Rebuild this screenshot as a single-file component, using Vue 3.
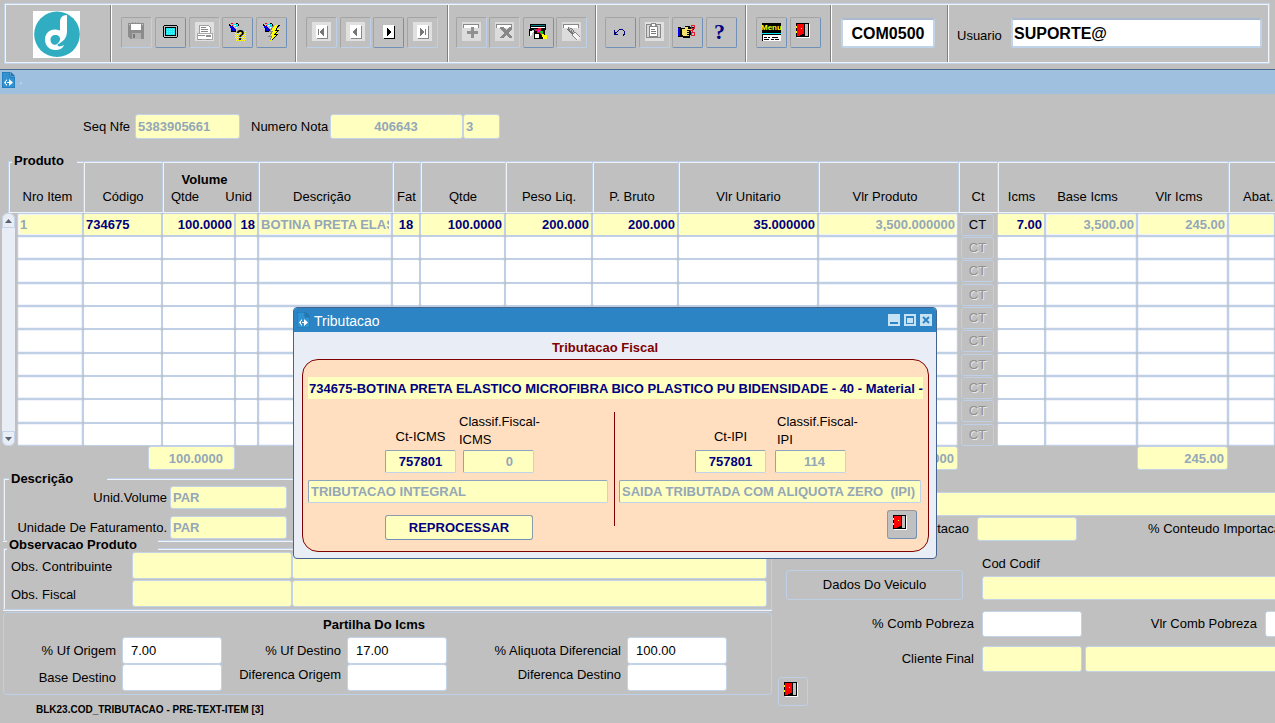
<script setup>
const columns = [
  { key: 'item', label: 'Nro Item', align: 'left', value: '1', locked: true },
  { key: 'codigo', label: 'Código', align: 'left', value: '734675' },
  { key: 'volQtde', label: 'Volume Qtde', align: 'right', value: '100.0000' },
  { key: 'volUnid', label: 'Volume Unid', align: 'right', value: '18' },
  { key: 'descricao', label: 'Descrição', align: 'left', value: 'BOTINA PRETA ELASTICO MICROFIBRA', locked: true },
  { key: 'fat', label: 'Fat', align: 'center', value: '18' },
  { key: 'qtde', label: 'Qtde', align: 'right', value: '100.0000' },
  { key: 'pesoLiq', label: 'Peso Liq.', align: 'right', value: '200.000' },
  { key: 'pesoBruto', label: 'P. Bruto', align: 'right', value: '200.000' },
  { key: 'unitario', label: 'Vlr Unitario', align: 'right', value: '35.000000' },
  { key: 'produto', label: 'Vlr Produto', align: 'right', value: '3,500.000000', locked: true },
  { key: 'ct', button: true },
  { key: 'icms', label: 'Icms', align: 'right', value: '7.00' },
  { key: 'baseIcms', label: 'Base Icms', align: 'right', value: '3,500.00', locked: true },
  { key: 'vlrIcms', label: 'Vlr Icms', align: 'right', value: '245.00', locked: true },
  { key: 'abat', label: 'Abat.', align: 'right', value: '', locked: true },
]
const rows = Array.from({ length: 10 }, (_, i) => i)
</script>

<template>
  <div class="page">
    <svg class="defs" aria-hidden="true">
      <defs>
        <pattern id="dots" width="2" height="2" patternUnits="userSpaceOnUse">
          <path d="M0 0h1v1H0zM1 1h1v1H1z" fill="#ff0" />
        </pattern>
      </defs>
      <symbol id="door" viewBox="0 0 19 19">
        <path d="M1 15h12v1H1zM13 2h1v14h-1z" fill="#fff" />
        <path d="M0 1h13v14H0z" fill="#000" />
        <path d="M9 2h3v12H9z" fill="#c0c0c0" />
        <path d="M1 2h7v10H6v1H4v1H1z" fill="#f00" />
        <path d="M8 2h1v11H6v1H4v-1h2v-1h2z" fill="#000" />
        <path d="M0 4h1v2H0zM0 9h1v2H0zM5 6h1v1H5z" fill="#ff0" />
      </symbol>
      <symbol id="torch" viewBox="0 0 19 19">
        <path d="M1 2h1v1h1v1H1zM2 4h2v1H2zM3 7h1v3H3zM4 9h4v1H4zM7 8h1v1H7zM8 1h2v1H8zM10 2h1v2h-1z" fill="#000" />
        <path d="M2 4h3v1h1v1h1v1h1v1H7v1H4V7H3V6H2z" fill="#0000e0" />
        <path d="M5 2h4v1h1v2H9v1H8V5H7V4H6V3H5z" fill="#00e8f0" />
        <path d="M3 1h2v1H3zM4 3h1v1H4z" fill="#f00" />
        <path d="M6 3h2v1H6zM8 5h1v1H8z" fill="#fff" />
      </symbol>
      <symbol id="doc" viewBox="0 0 13 16">
        <path d="M0 0h8v5h5v11H0z" fill="#3092d0" stroke="#1b72ae" />
        <path d="M9 0v4h4z" fill="#2176b0" />
        <path d="M2 10.500l3-3.500v2H4v3h1v2zM5 10h3v1H5zM7 7l4 3.500L7 14z" fill="#fff" />
      </symbol>
    </svg>

    <header class="toolbar">
      <div class="group g-logo">
        <svg class="logo" viewBox="0 0 47 47" role="img" aria-label="Logo">
          <path d="M0 0h47v47H0z" fill="#fff" />
          <circle cx="24" cy="23.300" r="22.800" fill="#30adc0" />
          <path d="M34 4C29 4 27 7 27 11v8.500C18 16 12 22 12 28.500 12 35 17 39 22 39c5 0 8-2 9-5-3 2-8 2-6-1 5-2 9-6 9-13z" fill="#fff" />
          <path d="M22.500 24c3 0 5 2 4.500 5-.5 2-2 3-3.500 4.500-3 1-6-1-6-4.500s2-5 5-5z" fill="#30adc0" />
        </svg>
      </div>
      <div class="group g-file">
        <button class="tool off" aria-label="Salvar"><svg viewBox="0 0 19 19">
          <path d="M1 1h16v16H3v-1H2v-1H1z" fill="#8c8c8c" /><path d="M4 2h10v6H4z" fill="#fff" />
          <path d="M2 2h1v1H2zM15 2h1v1h-1z" fill="#d0d0d0" /><path d="M5 11h9v6H5z" fill="#b0b0b0" /><path d="M6 12h2v4H6z" fill="#777" />
          <path d="M5 0h1v1H5zM8 0h1v1H8zM11 0h1v1h-1z" fill="#999" />
        </svg></button>
        <button class="tool" aria-label="Tela"><svg viewBox="0 0 19 19">
          <path d="M3 3h13v1h1v11h-1v1H3v-1H2V4h1z" fill="#000" /><path d="M3 4h13v11H3z" fill="#c0c0c0" /><path d="M4 5h11v9H4z" fill="#000" />
          <path d="M5 6h9v7H5z" fill="#20e8f0" />
          <path d="M6 7h7M6 9h7M6 11h7" transform="translate(0 .5)" stroke="#b8d8d8" stroke-dasharray="1 1" />
        </svg></button>
        <button class="tool off" aria-label="Imprimir"><svg viewBox="0 0 19 19">
          <path d="M0 0h19v19H0z" fill="#e0e0e0" /><path d="M4 3h9l2 2v6H4z" fill="#fff" stroke="#a0a0a0" />
          <path d="M6 5h5v1H6zM6 7h7v1H6zM6 9h7v1H6z" fill="#888" /><path d="M2 11h15v6H2z" fill="#fff" stroke="#aaa" />
          <path d="M3 13h7v1H3zM11 13h5v2h-5zM3 17h4v1H3zM11 17h4v1h-4z" fill="#909090" />
        </svg></button>
        <button class="tool" aria-label="Inserir consulta"><svg viewBox="0 0 19 19">
          <path d="M7 9h11v10H8v-3H7z" fill="url(#dots)" />
          <use href="#torch" />
          <text x="8" y="18" class="query">?</text>
        </svg></button>
        <button class="tool" aria-label="Executar consulta"><svg viewBox="0 0 19 19">
          <use href="#torch" />
          <path d="M13 3h5l-3 4h3l-3 4h2l-9 8 2-6H7l3-4H8z" fill="#ff0" />
          <path d="M18 3h-1l-3 5h3l-4 4h3l-6 6" fill="none" stroke="#000" />
          <path d="M12 3l-4 6h3l-4 5h3l-2 4" fill="none" stroke="#888" />
        </svg></button>
      </div>
      <div class="group g-nav">
        <button class="tool off" aria-label="Primeiro registro"><svg viewBox="0 0 19 19">
          <path d="M0 0h19v19H0z" fill="#e0e0e0" /><path d="M5 4h11v13H5z" fill="#888" /><path d="M4 3h11v13H4z" fill="#fff" />
          <path d="M6 7h1v6H6zM12 6v8h-1v-1h-1v-1H9v-1H8V9h1V8h1V7h1V6z" fill="#777" />
        </svg></button>
        <button class="tool off" aria-label="Registro anterior"><svg viewBox="0 0 19 19">
          <path d="M0 0h19v19H0z" fill="#e0e0e0" /><path d="M5 4h11v13H5z" fill="#888" /><path d="M4 3h11v13H4z" fill="#fff" />
          <path d="M11 6v8h-1v-1H9v-1H8v-1H7V9h1V8h1V7h1V6z" fill="#777" />
        </svg></button>
        <button class="tool" aria-label="Próximo registro"><svg viewBox="0 0 19 19">
          <path d="M5 4h11v13H5z" fill="#000" /><path d="M4 3h11v13H4z" fill="#fff" />
          <path d="M8 6v8h1v-1h1v-1h1v-1h1V9h-1V8h-1V7H9V6z" fill="#000" />
        </svg></button>
        <button class="tool off" aria-label="Último registro"><svg viewBox="0 0 19 19">
          <path d="M0 0h19v19H0z" fill="#e0e0e0" /><path d="M5 4h11v13H5z" fill="#888" /><path d="M4 3h11v13H4z" fill="#fff" />
          <path d="M12 7h1v6h-1zM7 6v8h1v-1h1v-1h1v-1h1V9h-1V8H9V7H8V6z" fill="#777" />
        </svg></button>
      </div>
      <div class="group g-rec">
        <button class="tool off" aria-label="Inserir registro"><svg viewBox="0 0 19 19">
          <path d="M0 0h19v19H0z" fill="#dcdcdc" /><path d="M1 2h16v4H1z" fill="#888" /><path d="M2 3h14v3H2z" fill="#fff" />
          <path d="M9 5h3v4h4v3h-4v4H9v-4H5V9h4z" fill="#909090" />
        </svg></button>
        <button class="tool off" aria-label="Remover registro"><svg viewBox="0 0 19 19">
          <path d="M0 0h19v19H0z" fill="#dcdcdc" /><path d="M1 2h16v4H1z" fill="#888" /><path d="M2 3h14v3H2z" fill="#fff" />
          <path d="M5 5h3l3 3 3-3h3v2l-4 4 4 4v1h-3l-3-3-3 3H5v-1l4-4-4-4z" fill="#888" />
        </svg></button>
        <button class="tool" aria-label="Limpar registro"><svg viewBox="0 0 19 19">
          <path d="M1 2h16v6H1zM0 7h3v2H2v5H0zM5 8h11v9H5z" fill="#000" /><path d="M2 3h14v1H2zM5 7h3v1H5z" fill="#008080" />
          <path d="M2 5h14v1H2zM1 9h4l-4 6zM6 12h4v4H6z" fill="#fff" /><path d="M6 7h3V6h3v3h2v3h-3v-1H8V9H6z" fill="#f01030" />
          <path d="M9 8h2v2H9z" fill="#f0f" /><path d="M11 9h3v4h-2v-2h-1z" fill="#00d020" /><path d="M13 12h2v1h3v4h-4v-2h-1z" fill="#ff0" />
        </svg></button>
        <button class="tool off" aria-label="Apagar registro"><svg viewBox="0 0 19 19">
          <path d="M0 0h19v19H0z" fill="#dcdcdc" /><path d="M1 2h16v4H1z" fill="#888" /><path d="M2 3h14v3H2z" fill="#fff" />
          <path d="M6 6l8 7" stroke="#777" stroke-width="4" /><path d="M7 6l7 6" stroke="#c8c8c8" stroke-width="2" stroke-dasharray="1 1" /><path d="M12 12l5 5" stroke="#888" stroke-width="5" /><path d="M12 12l5 5" stroke="#f4f4f4" stroke-width="3" />
        </svg></button>
      </div>
      <div class="group g-edit">
        <button class="tool" aria-label="Desfazer"><svg viewBox="0 0 19 19">
          <path d="M3 8h1v3h1v1h2v1H3zM4 10h2v1H4zM6 9h1v1H6zM7 8h1v1H7zM8 7h4v1H8zM12 8h1v1h-1zM13 9h1v4h-1zM12 12h1v2h-1z" fill="#000080" />
        </svg></button>
        <button class="tool off" aria-label="Colar"><svg viewBox="0 0 19 19">
          <path d="M0 0h19v19H0z" fill="#e0e0e0" /><path d="M1.500 2.500h14v13h-14z" fill="#d8d8d8" stroke="#888" /><path d="M4.500 4.500h8v10h-8z" fill="#fff" stroke="#888" />
          <path d="M5 2h1V1h5v1h1v3H5z" fill="#888" /><path d="M7 2h3v2H7z" fill="#fff" /><path d="M6 7h4v1H6zM6 9h5v1H6zM6 11h5v1H6z" fill="#777" />
        </svg></button>
        <button class="tool" aria-label="Recortar"><svg viewBox="0 0 19 19">
          <path d="M0 5h3v10H0z" fill="#000" /><path d="M0 6h2v8H0z" fill="#00f" /><path d="M3 6h4V4h5v1h4v3h-3v5h-1v3H5v-1H3z" fill="#000" />
          <path d="M4 7h3V5h3v2h4v1H9v1h2v1H9v1h2v1H9v1h2v1H5v-1H4z" fill="#f0e070" />
          <circle cx="15" cy="5" r="2" fill="none" stroke="#e02030" /><circle cx="15" cy="12" r="2" fill="none" stroke="#e02030" /><path d="M12 8h3v1h-3zM14 7h1v4h-1z" fill="#e02030" />
        </svg></button>
        <button class="tool" aria-label="Ajuda"><svg viewBox="0 0 19 19"><text x="2" y="17" class="help">?</text></svg></button>
      </div>
      <div class="group g-menu">
        <button class="tool" aria-label="Menu"><svg viewBox="0 0 19 19">
          <path d="M0 1h19v9H0z" fill="#000" />
          <text x="-1" y="8" class="menu-word">Menu</text>
          <path d="M0 10h19v1H0zM0 12h19v1H0z" fill="#000" /><path d="M0 11h19v1H0z" fill="#00e8f0" />
          <path d="M0 13h19v6H0z" fill="#fff" /><path d="M0 13h1v6H0zM2 15h3v1H2zM6 15h2v1H6zM10 15h6v1h-6zM2 17h5v1H2zM9 17h3v1H9zM13 17h4v1h-4z" fill="#000" />
        </svg></button>
        <button class="tool" aria-label="Sair"><svg viewBox="0 0 19 19"><use href="#door" /></svg></button>
      </div>
      <div class="group g-code">
        <input class="banner" aria-label="Programa" value="COM0500" />
      </div>
      <div class="group g-user">
        <label for="usuario">Usuario</label>
        <input id="usuario" class="banner user" value="SUPORTE@" />
      </div>
    </header>

    <div class="titlebar">
      <svg class="doc"><use href="#doc" /></svg><span>.</span>
    </div>

    <main>
      <div class="nota">
        <label for="seq">Seq Nfe</label>
        <input id="seq" class="field w-seq" value="5383905661" disabled />
        <label for="nota" class="l-nota">Numero Nota</label>
        <input id="nota" class="field w-nota center" value="406643" disabled />
        <input class="field w-serie" aria-label="Serie" value="3" disabled />
      </div>

      <section class="produto">
        <h2 class="legend">Produto</h2>
        <table>
          <colgroup>
            <col class="c15" /><col class="c66" /><col class="c79" /><col class="c73" /><col class="c23" /><col class="c134" />
            <col class="c28" /><col class="c85" /><col class="c87" /><col class="c86" /><col class="c140" /><col class="c140" />
            <col class="c39" /><col class="c48" /><col class="c92" /><col class="c91" /><col />
          </colgroup>
          <thead>
            <tr class="h1">
              <th colspan="2" rowspan="2" class="first"><div>Nro Item</div></th>
              <th rowspan="2" class="mid">Código</th>
              <th colspan="2" class="volume">Volume</th>
              <th rowspan="2">Descrição</th>
              <th rowspan="2" class="mid">Fat</th>
              <th rowspan="2" class="mid">Qtde</th>
              <th rowspan="2" class="mid">Peso Liq.</th>
              <th rowspan="2">P. Bruto</th>
              <th rowspan="2" class="mid">Vlr Unitario</th>
              <th rowspan="2">Vlr Produto</th>
              <th rowspan="2" class="mid">Ct</th>
              <th rowspan="2" class="mid">Icms</th>
              <th rowspan="2" class="open">Base Icms</th>
              <th rowspan="2" class="open">Vlr Icms</th>
              <th rowspan="2" class="abat">Abat.</th>
            </tr>
            <tr class="h2">
              <th class="sub">Qtde</th>
              <th class="open unid">Unid</th>
            </tr>
          </thead>
          <tbody>
            <tr v-for="r in rows" :key="r">
              <td v-if="r === 0" rowspan="10" class="scroll-cell">
                <div class="scroll">
                  <button class="up" aria-label="Subir"><svg viewBox="0 0 7 4"><path d="M0 4l3.500-4L7 4z" fill="#5a6272" /></svg></button>
                  <button class="down" aria-label="Descer"><svg viewBox="0 0 7 4"><path d="M0 0l3.500 4L7 0z" fill="#5a6272" /></svg></button>
                </div>
              </td>
              <td v-for="c in columns" :key="c.key">
                <button v-if="c.button" class="ct" :disabled="r > 0">CT</button>
                <input
                  v-else
                  :class="['cell', c.align, { current: r === 0, soft: c.locked }]"
                  :aria-label="c.label + ' ' + (r + 1)"
                  :value="r === 0 ? c.value : ''"
                  :disabled="c.locked"
                />
              </td>
            </tr>
          </tbody>
        </table>
      </section>

      <div class="totals">
        <input class="field t-qtde right" aria-label="Total Qtde" value="100.0000" disabled />
        <input class="field t-prod right" aria-label="Total Produto" value="3,500.000000" disabled />
        <input class="field t-icms right" aria-label="Total Icms" value="245.00" disabled />
      </div>

      <div class="lower">
        <div class="left-side">
          <fieldset class="box descricao">
            <legend class="legend">Descrição</legend>
            <label for="uv">Unid.Volume</label>
            <input id="uv" class="field" value="PAR" disabled />
            <label for="uf">Unidade De Faturamento.</label>
            <input id="uf" class="field" value="PAR" disabled />
          </fieldset>

          <fieldset class="box obs">
            <legend class="legend">Observacao Produto</legend>
            <label for="oc">Obs. Contribuinte</label>
            <input id="oc" class="field" disabled />
            <input class="field" aria-label="Descrição Obs. Contribuinte" disabled />
            <label for="of">Obs. Fiscal</label>
            <input id="of" class="field" disabled />
            <input class="field" aria-label="Descrição Obs. Fiscal" disabled />
          </fieldset>

          <section class="partilha">
            <h2>Partilha Do Icms</h2>
            <div class="partilha-grid">
              <label for="p1">% Uf Origem</label><input id="p1" class="field plain" value="7.00" />
              <label for="p2">% Uf Destino</label><input id="p2" class="field plain" value="17.00" />
              <label for="p3">% Aliquota Diferencial</label><input id="p3" class="field plain" value="100.00" />
              <label for="p4">Base Destino</label><input id="p4" class="field plain" />
              <label for="p5" class="high">Diferenca Origem</label><input id="p5" class="field plain" />
              <label for="p6" class="high">Diferenca Destino</label><input id="p6" class="field plain" />
            </div>
          </section>
          <p class="status">BLK23.COD_TRIBUTACAO - PRE-TEXT-ITEM [3]</p>
        </div>

        <div class="right-side">
          <input class="field long" aria-label="Descrição complementar" disabled />
          <div class="line imp">
            <label for="imp" class="lead">% Importacao</label>
            <input id="imp" class="field w100" disabled />
            <span class="conteudo">% Conteudo Importacao</span>
          </div>
          <div class="line codif">
            <button class="veiculo">Dados Do Veiculo</button>
            <div class="stack">
              <label for="codif">Cod Codif</label>
              <input id="codif" class="field" disabled />
            </div>
          </div>
          <div class="line pobreza">
            <label for="cp" class="lead">% Comb Pobreza</label>
            <input id="cp" class="field plain w100" />
            <label for="vp" class="vlr">Vlr Comb Pobreza</label>
            <input id="vp" class="field plain grow" />
          </div>
          <div class="line cliente">
            <label for="cf" class="lead">Cliente Final</label>
            <input id="cf" class="field w100" disabled />
            <input class="field grow" aria-label="Nome Cliente Final" disabled />
          </div>
          <button class="exit flat" aria-label="Sair da tela"><svg viewBox="0 0 19 19"><use href="#door" /></svg></button>
        </div>
      </div>
    </main>

    <div class="dialog" role="dialog" aria-labelledby="dlg-title">
      <div class="dialog-bar">
        <svg class="doc small"><use href="#doc" /></svg>
        <span id="dlg-title">Tributacao</span>
        <button aria-label="Minimizar"><svg viewBox="0 0 12 12"><path d="M2 8h8v2H2z" fill="#2c84c4" /></svg></button>
        <button aria-label="Maximizar"><svg viewBox="0 0 12 12"><path d="M2 2h8v8H2zM3 4v5h6V4z" fill="#2c84c4" fill-rule="evenodd" /></svg></button>
        <button aria-label="Fechar"><svg viewBox="0 0 12 12"><path d="M3 3l6 6M9 3l-6 6" stroke="#2c84c4" stroke-width="2" /></svg></button>
      </div>
      <h2>Tributacao Fiscal</h2>
      <div class="panel">
        <input class="item-name" aria-label="Produto" value="734675-BOTINA PRETA ELASTICO MICROFIBRA BICO PLASTICO PU BIDENSIDADE - 40 - Material -" />
        <div class="halves">
          <div class="half">
            <div class="pair icms">
              <div class="ct-col"><label for="cti">Ct-ICMS</label><input id="cti" class="box-field center" value="757801" /></div>
              <div class="cl-col"><label for="cli">Classif.Fiscal-<br />ICMS</label><input id="cli" class="box-field num" value="0" disabled /></div>
            </div>
            <input class="box-field w300" aria-label="Tributacao ICMS" value="TRIBUTACAO INTEGRAL" disabled />
            <button class="reprocess">REPROCESSAR</button>
          </div>
          <div class="divider"></div>
          <div class="half">
            <div class="pair ipi">
              <div class="ct-col"><label for="ctp">Ct-IPI</label><input id="ctp" class="box-field center" value="757801" /></div>
              <div class="cl-col"><label for="clp">Classif.Fiscal-<br />IPI</label><input id="clp" class="box-field num" value="114" disabled /></div>
            </div>
            <input class="box-field w302" aria-label="Tributacao IPI" value="SAIDA TRIBUTADA COM ALIQUOTA ZERO  (IPI)" disabled />
            <button class="exit raised" aria-label="Fechar tributacao"><svg viewBox="0 0 19 19"><use href="#door" /></svg></button>
          </div>
        </div>
      </div>
    </div>
  </div>
</template>

<style>
body { background: #c0c0c0; }
</style>

<style scoped>
* { box-sizing: border-box; margin: 0; padding: 0; }
.page {
  position: relative;
  min-height: 100vh;
  overflow: hidden;
  background: #c0c0c0;
  color: #000;
  font: 13px/16px "Liberation Sans", Arial, sans-serif;
}
input, button { font: inherit; color: inherit; min-width: 0; outline: none; }
h2 { font-size: 13px; line-height: 16px; font-weight: bold; }
label { white-space: nowrap; }
.defs { position: absolute; width: 0; height: 0; }
svg { display: block; }

/* toolbar */
.toolbar {
  display: flex;
  height: 61px;
  margin: 3px 5px 5px 4px;
  border: 1px solid #bfd3ea;
  box-shadow: inset 0 0 0 1px #eff5fb;
}
.group {
  display: flex;
  flex: none;
  align-items: flex-start;
  justify-content: space-between;
  padding: 12px 8px 0;
  margin: 1px 0;
  border-right: 1px solid #808080;
  box-shadow: 1px 0 #fff;
}
.g-logo { width: 106px; padding: 6px 0 0 28px; }
.g-file { width: 185px; padding-left: 10px; }
.g-nav { width: 152px; padding: 12px 9px 0 10px; }
.g-rec { width: 148px; }
.g-edit { width: 150px; padding-left: 9px; }
.g-menu { width: 85px; padding: 12px 9px 0 10px; }
.g-code { width: 117px; padding: 13px 12px 0 10px; }
.g-user { flex: 1; align-items: center; padding: 0 7px 0 9px; border-right: 0; box-shadow: none; }
.logo { width: 47px; height: 47px; }
.tool {
  width: 31px;
  height: 31px;
  padding: 4px 5px 6px;
  background: #c0c0c0;
  border: 1px solid #a4a4a4;
  border-right-color: #6f90b8;
  border-bottom-color: #6f90b8;
  border-radius: 2px;
}
.tool.off { border-right-color: #bdd0ea; border-bottom-color: #bdd0ea; }
.tool svg { width: 19px; height: 19px; overflow: visible; shape-rendering: crispEdges; }
.query { font: bold 14px "Liberation Sans", sans-serif; }
.help { font: bold 22px "Liberation Serif", serif; fill: #000080; }
.menu-word { font: bold 8px "Liberation Sans", sans-serif; fill: #ff0; }
.banner {
  width: 100%;
  height: 30px;
  padding-top: 2px;
  background: #fff;
  border: 2px solid #bfd3ea;
  border-top-color: #a9b9cf;
  border-radius: 3px;
  text-align: center;
  font-size: 16px;
  font-weight: bold;
}
.g-user label { width: 54px; padding-top: 4px; flex: none; }
.banner.user { text-align: left; padding-left: 1px; margin-bottom: 2px; }
.titlebar {
  display: flex;
  height: 25px;
  padding: 2px 0 0 2px;
  gap: 4px;
  background: #9fc0df;
  border-top: 1px solid #4b6a92;
  color: #d8e6f3;
}
.doc { width: 13px; height: 16px; }

/* fields */
.field {
  height: 24px;
  padding: 0 3px 0 2px;
  background: #ffffc0;
  border: 1px solid #c3d3e8;
  border-radius: 3px;
  font-weight: bold;
}
input:disabled { color: #93a7b8; }
.field.plain { background: #fff; font-weight: normal; padding-left: 8px; }
.center { text-align: center; }
.right { text-align: right; }
.left { text-align: left; }

.nota { display: flex; align-items: center; padding: 20px 0 22px 83px; }
.nota label { width: 52px; }
.nota .l-nota { width: 79px; margin-left: 11px; }
.nota .field { height: 25px; }
.w-seq { width: 105px; }
.w-nota { width: 133px; }
.w-serie { width: 37px; }

.produto { position: relative; padding-left: 2px; }
.legend { position: absolute; background: #c0c0c0; font-weight: bold; line-height: 16px; }
.produto .legend { left: 12px; top: -8px; width: 65px; padding-left: 2px; z-index: 1; }
table { width: 100%; table-layout: fixed; border-spacing: 0; }
.c15 { width: 15px; } .c66 { width: 66px; } .c79 { width: 79px; } .c73 { width: 73px; }
.c23 { width: 23px; } .c134 { width: 134px; } .c28 { width: 28px; } .c85 { width: 85px; }
.c87 { width: 87px; } .c86 { width: 86px; } .c140 { width: 140px; } .c39 { width: 39px; }
.c48 { width: 48px; } .c92 { width: 92px; } .c91 { width: 91px; }
th {
  font-weight: normal;
  vertical-align: bottom;
  white-space: nowrap;
  line-height: 15px;
  padding: 0 7px 8px 0;
  border-left: 1px solid #bdd0e8;
  border-top: 1px solid #bdd0e8;
  border-bottom: 1px solid #eef3fa;
  box-shadow: inset 1px 1px #eef3fa;
}
th.mid { padding-right: 0; }
.h1 { height: 26px; }
.h2 { height: 26px; }
th.volume { font-weight: bold; padding: 0 12px 0 0; border-bottom: 0; }
th.open { border-left: 0; box-shadow: inset 0 1px #eef3fa; }
th.sub { border-top: 0; padding-right: 28px; box-shadow: inset 1px 0 #eef3fa; }
th.unid { border-top: 0; box-shadow: none; direction: rtl; padding-right: 6px; }
th.first { border: 0; box-shadow: none; padding: 0 0 0 6px; }
.first div {
  height: 52px;
  padding: 27px 0 0 3px;
  border: 1px solid #bdd0e8;
  border-right: 0;
  border-bottom-color: #eef3fa;
  box-shadow: inset 1px 1px #eef3fa;
}
th.abat { text-align: left; padding-left: 14px; }
td { height: 23px; }
tr:nth-child(3n) td { height: 24px; }
.cell {
  display: block;
  width: 100%;
  height: 100%;
  padding: 0 2px;
  background: #fff;
  border: 1px solid #bfcfe5;
  border-radius: 2px;
  color: #000080;
  font-weight: bold;
}
.cell.current { background: #ffffc0; }
.cell.soft { box-shadow: inset 0 0 0 1px #f0f4fa; }
.scroll-cell { vertical-align: top; }
.scroll {
  display: flex;
  flex-direction: column;
  justify-content: space-between;
  width: 13px;
  height: 233px;
  background: #e9eef6;
  border-radius: 6px;
}
.scroll button {
  display: flex;
  align-items: center;
  justify-content: center;
  height: 15px;
  background: #e9eef6;
  border: 1px solid #c3d3e8;
}
.scroll svg { width: 7px; height: 4px; }
.up { border-radius: 6px 6px 0 0; }
.down { border-radius: 0 0 6px 6px; }
.ct {
  display: block;
  width: 33px;
  height: 22px;
  margin-left: 3px;
  background: #c0c0c0;
  border: 1px solid #bdd0e8;
  border-radius: 3px;
}
.ct:disabled { color: #909090; text-shadow: 1px 1px #e8e8e8; }

.totals { display: flex; padding-left: 148px; }
.t-qtde { width: 87px; padding-right: 11px; }
.t-prod { width: 140px; margin-left: 583px; }
.t-icms { width: 91px; margin-left: 179px; }

/* lower area */
.lower { display: flex; }
.left-side { flex: none; width: 772px; padding: 8px 0 0 3px; }
.box {
  position: relative;
  display: grid;
  align-items: center;
  border: 1px solid #bdd0e8;
  box-shadow: inset 1px 1px #eef3fa, 0 1px #eef3fa;
}
.descricao { grid-template-columns: 163px 117px; gap: 7px 3px; padding: 7px 0 1px; }
.descricao label { text-align: right; }
.descricao .field { height: 23px; }
.descricao .legend { left: 5px; top: -8px; width: 98px; padding-left: 2px; }
.obs { grid-template-columns: 121px 160px 1fr; row-gap: 1px; margin-top: 7px; padding: 3px 4px 2px 7px; }
.obs label { padding-top: 3px; }
.obs .field { height: 27px; }
.obs .legend { left: 3px; top: -12px; width: 151px; padding-left: 2px; line-height: 15px; }
.partilha { margin-top: 2px; padding: 4px 0 3px; border: 1px solid #bdd0e8; border-radius: 4px; }
.partilha h2 { width: 740px; text-align: center; margin-bottom: 4px; }
.partilha-grid { display: grid; grid-template-columns: 118px 100px 125px 100px 180px 100px; align-items: center; }
.partilha label { text-align: right; padding-right: 6px; }
.partilha label.high { padding-bottom: 6px; }
.partilha .field { height: 27px; }
.status { padding: 7px 0 0 33px; font-size: 10px; font-weight: bold; }

.right-side { flex: 1; min-width: 0; margin-right: -4px; padding-top: 22px; }
.right-side .long { display: block; width: 100%; }
.line { display: flex; align-items: center; }
.lead { width: 210px; padding-right: 8px; text-align: right; flex: none; }
.imp .lead { width: 205px; }
.w100 { width: 100px; flex: none; }
.imp { margin-top: 1px; }
.conteudo { margin-left: 71px; white-space: nowrap; }
.codif { margin-top: 15px; align-items: flex-end; }
.veiculo {
  flex: none;
  width: 177px;
  height: 30px;
  margin: 0 19px 0 14px;
  background: #c0c0c0;
  border: 1px solid #bdd0e8;
  border-radius: 3px;
}
.stack { flex: 1; min-width: 0; display: flex; flex-direction: column; gap: 4px; }
.pobreza { margin-top: 11px; }
.pobreza .field, .cliente .field { height: 26px; }
.vlr { width: 183px; flex: none; text-align: right; padding-right: 8px; }
.grow { flex: 1; }
.cliente { margin-top: 9px; }
.cliente .grow { margin-left: 3px; }
.exit { display: block; background: #c0c0c0; width: 30px; height: 29px; padding: 3px 5px 5px; border-radius: 3px; }
.exit svg { width: 19px; height: 19px; shape-rendering: crispEdges; }
.exit.flat { margin: 5px 0 0 6px; border: 1px solid #bdd0e8; }
.exit.raised { margin: 7px 0 0 272px; border: 1px solid #989898; border-right-color: #6f90b8; border-bottom-color: #6f90b8; }

/* dialog */
.dialog {
  position: absolute;
  left: 293px;
  top: 307px;
  width: 644px;
  padding-bottom: 6px;
  background: #e9eef6;
  border: 1px solid #45638f;
  border-radius: 4px;
  z-index: 2;
}
.dialog-bar {
  display: flex;
  align-items: center;
  gap: 4px;
  height: 24px;
  padding: 0 4px 0 3px;
  background: #2c84c4;
  border-radius: 3px 3px 0 0;
  color: #fff;
}
.dialog-bar span { flex: 1; font-size: 14px; padding-top: 2px; }
.dialog-bar button { width: 12px; height: 12px; background: #c6e2f5; border: 0; }
.dialog h2 { padding: 8px 20px 3px 0; text-align: center; color: #800000; }
.panel {
  margin: 0 7px 0 8px;
  padding: 17px 5px 11px;
  background: #ffdfc0;
  border: 1px solid #800000;
  border-radius: 16px;
}
.item-name { display: block; width: 100%; height: 22px; padding-left: 1px; background: #ffffc0; border: 0; color: #000080; font-weight: bold; }
.halves { display: grid; grid-template-columns: 306px 1px 1fr; padding-top: 13px; align-items: start; }
.divider { height: 114px; background: #800000; }
.pair { display: flex; align-items: flex-end; }
.icms { padding-left: 77px; gap: 3px; }
.ipi { padding-left: 80px; gap: 9px; }
.ct-col, .cl-col { display: flex; flex-direction: column; line-height: 18px; }
.ct-col { text-align: center; }
.ct-col label { padding-bottom: 4px; }
.cl-col label { padding-bottom: 1px; padding-top: 1px; }
.icms .cl-col .box-field { margin-left: 4px; }
.ipi .cl-col label { padding-left: 2px; }
.box-field {
  display: block;
  width: 71px;
  height: 23px;
  padding: 0 2px;
  background: #ffffc0;
  border: 1px solid #bfd3ea;
  border-top-color: #8fa5bd;
  border-left-color: #8fa5bd;
  border-radius: 2px;
  color: #000080;
  font-weight: bold;
}
.num { text-align: right; padding-right: 20px; }
.w300 { width: 300px; margin-top: 7px; }
.w302 { width: 302px; margin: 7px 0 0 4px; }
.reprocess {
  display: block;
  width: 148px;
  height: 25px;
  margin: 12px 0 0 77px;
  background: #ffffc0;
  border: 1px solid #8c9cac;
  border-bottom-color: #6f90b8;
  border-radius: 3px;
  color: #000080;
  font-weight: bold;
}
</style>
